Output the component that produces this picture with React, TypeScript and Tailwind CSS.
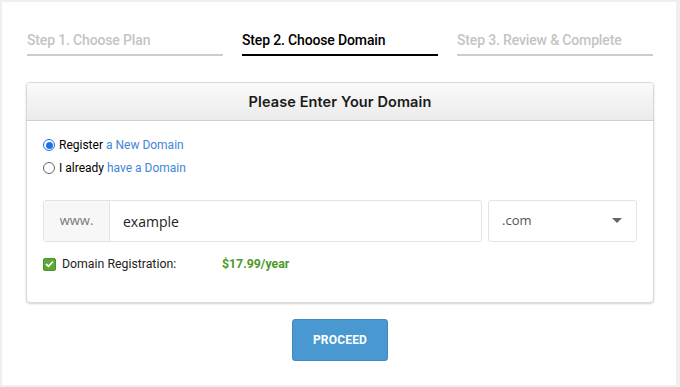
import React from 'react';

const steps = [
  {label: 'Step 1. Choose Plan', active: false},
  {label: 'Step 2. Choose Domain', active: true},
  {label: 'Step 3. Review & Complete', active: false},
];

export default function App() {
  return (
    <div className="w-[680px] h-[387px] bg-[#efefef] pl-[2px] pt-[2px] pr-[4px] pb-[2px] font-['Roboto',sans-serif]">
      <div className="w-full h-full bg-white flex flex-col pl-[24px] pr-[22px]">
        {/* steps */}
        <div className="grid grid-cols-3 gap-[19px] pt-[30px] px-[1px]">
          {steps.map((s) => (
            <div
              key={s.label}
              className={`h-[24px] border-b-2 text-[14px] font-medium leading-[17px] tracking-[-0.15px] ${
                s.active ? 'border-black text-black' : 'border-[#cccccc] text-[#c4c4c4]'
              }`}
            >
              {s.label}
            </div>
          ))}
        </div>

        {/* panel */}
        <div className="mt-[26px] rounded-[4px] border border-[#d9d9d9] shadow-[0_1px_2px_rgba(0,0,0,0.18)] overflow-hidden">
          <div className="h-[38px] bg-gradient-to-b from-[#fafafa] to-[#ebebeb] border-b border-[#cfcfcf] flex items-center justify-center">
            <span className="text-[14.5px] font-semibold text-[#1a1a1a] font-['Inter',sans-serif] tracking-[0.1px]">
              Please Enter Your Domain
            </span>
          </div>

          <div className="px-[16px] pt-[17px] pb-[29px]">
            <div className="flex flex-col gap-[9px] text-[12px] leading-[14px]">
              <label className="flex items-center gap-[4px]">
                <span className="w-[12px] h-[12px] rounded-full border border-[#1a73e8] bg-white flex items-center justify-center">
                  <span className="w-[7px] h-[7px] rounded-full bg-[#1a73e8]" />
                </span>
                <span className="text-black">
                  Register <span className="text-[#3f86d8]">a New Domain</span>
                </span>
              </label>
              <label className="flex items-center gap-[4px]">
                <span className="w-[12px] h-[12px] rounded-full border border-[#666666] bg-white" />
                <span className="text-black">
                  I already <span className="text-[#3f86d8]">have a Domain</span>
                </span>
              </label>
            </div>

            <div className="flex gap-[6px] mt-[25px] h-[42px]">
              <div className="flex flex-1 border border-[#e3e3e3] rounded-[3px] overflow-hidden">
                <div className="w-[66px] bg-[#f7f7f7] border-r border-[#e3e3e3] flex items-center justify-center text-[13px] text-[#777777] font-['Open_Sans',sans-serif]">
                  www.
                </div>
                <div className="flex-1 flex items-center pl-[13px] text-[14px] text-[#222222] font-['Open_Sans',sans-serif]">
                  example
                </div>
              </div>
              <div className="w-[149px] border border-[#e3e3e3] rounded-[3px] flex items-center justify-between pl-[13px] pr-[14px] text-[13px] text-[#555555] font-['Open_Sans',sans-serif]">
                <span>.com</span>
                <svg width="10" height="6" viewBox="0 0 10 6">
                  <path d="M0 0 L10 0 L5 5 Z" fill="#666666" />
                </svg>
              </div>
            </div>

            <div className="flex items-center mt-[13px] text-[12.3px]">
              <span className="w-[13px] h-[13px] rounded-[2px] bg-[#5aa832] border border-[#4a9526] flex items-center justify-center">
                <svg width="9" height="8" viewBox="0 0 9 8">
                  <path d="M1 4 L3.5 6.3 L8 1.5" stroke="#ffffff" strokeWidth="1.8" fill="none" />
                </svg>
              </span>
              <span className="ml-[6px] w-[160px] text-[#222222]">Domain Registration:</span>
              <span className="font-bold text-[#4c9a2a]">$17.99/year</span>
            </div>
          </div>
        </div>

        <div className="flex justify-center mt-[16px]">
          <button className="w-[96px] h-[42px] rounded-[3px] bg-[#4a98d2] border border-[#3f88c0] text-white text-[12px] font-bold tracking-[0.2px]">
            PROCEED
          </button>
        </div>
      </div>
    </div>
  );
}
